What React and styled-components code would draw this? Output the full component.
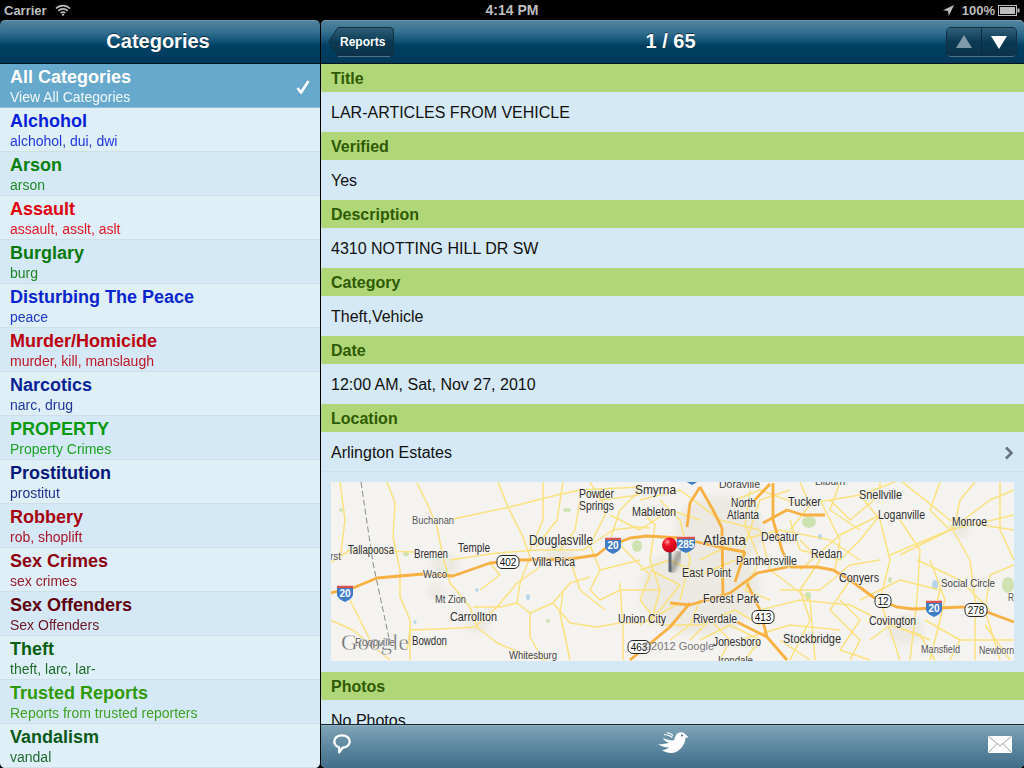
import React from 'react'
import styled, { createGlobalStyle } from 'styled-components'

const GlobalStyle = createGlobalStyle`
  html, body { margin: 0; padding: 0; background: #000; }
  body { font-family: "Liberation Sans", Arial, sans-serif; }
`

const Screen = styled.div`
  width: 1024px;
  height: 768px;
  display: flex;
  flex-direction: column;
  overflow: hidden;
  background: #000;
`

const StatusBar = styled.div`
  height: 20px;
  flex: none;
  display: grid;
  grid-template-columns: 1fr auto 1fr;
  align-items: center;
  padding: 0 4px;
  box-sizing: border-box;
  color: #bdbdbd;
  font-size: 13px;
  font-weight: bold;
`

const StatusTime = styled.div`
  font-size: 14px;
`

const StatusLeft = styled.div`
  display: flex;
  align-items: center;
  gap: 8px;
`

const StatusRight = styled.div`
  display: flex;
  align-items: center;
  justify-content: flex-end;
  gap: 3px;
  svg:first-child { margin-right: 5px; }
`

const Main = styled.div`
  flex: 1;
  min-height: 0;
  display: flex;
  gap: 1px;
`

const Sidebar = styled.div`
  width: 320px;
  flex: none;
  display: flex;
  flex-direction: column;
  border-radius: 5px;
  overflow: hidden;
`

const Detail = styled.div`
  flex: 1;
  min-width: 0;
  display: flex;
  flex-direction: column;
  border-radius: 5px;
  overflow: hidden;
  background: #d5e8f6;
`

const NavBar = styled.div`
  height: 44px;
  flex: none;
  box-sizing: border-box;
  display: grid;
  grid-template-columns: 1fr auto 1fr;
  align-items: center;
  padding: 0 7px 1px;
  border-bottom: 1px solid #02141f;
  background: linear-gradient(#6a97ad 0, #4f829c 2px, #357090 12px, #14577a 20px, #003f61 26px, #003a5a 43px);
`

const NavTitle = styled.div`
  grid-column: 2;
  margin-right: 4px;
  color: #fff;
  font-size: 20px;
  font-weight: bold;
  text-shadow: 0 -1px 0 rgba(0, 0, 0, 0.5);
`

const BackButton = styled.div`
  position: relative;
  justify-self: start;
  width: 66px;
  height: 30px;
  margin-top: 1px;
  box-sizing: border-box;
  padding-left: 12px;
  display: flex;
  align-items: center;
  color: #fff;
  font-size: 12px;
  font-weight: bold;
  svg { position: absolute; left: 0; top: 0; }
  span { position: relative; }
`

const ArrowGroup = styled.div`
  justify-self: end;
  display: flex;
  width: 71px;
  height: 30px;
  margin-top: 1px;
  box-sizing: border-box;
  border: 1px solid #12303f;
  border-bottom-color: #4a7288;
  border-radius: 5px;
  overflow: hidden;
`

const ArrowButton = styled.div`
  flex: 1;
  display: flex;
  align-items: center;
  justify-content: center;
  background: linear-gradient(#2f5f79, #0a3a54 50%, #0c3249);
  & + & { border-left: 1px solid #0c2c3e; }
`

const CategoryList = styled.div`
  flex: 1;
  min-height: 0;
  overflow: hidden;
`

const CategoryRow = styled.div`
  height: 44px;
  box-sizing: border-box;
  padding: 2px 10px 0;
  display: flex;
  align-items: center;
  justify-content: space-between;
  border-bottom: 1px solid ${p => (p.$selected ? '#8fbfd8' : '#cfdfe8')};
  background: ${p => (p.$selected ? '#67a9cc' : p.$odd ? '#d5e8f6' : '#deeff8')};
  color: ${p => p.$color};
`

const CategoryName = styled.div`
  font-size: 18px;
  line-height: 21px;
  font-weight: bold;
`

const CategoryHint = styled.div`
  font-size: 14px;
  line-height: 19px;
  opacity: 0.9;
`

const Content = styled.div`
  flex: 1;
  min-height: 0;
  overflow: hidden;
`

const SectionHeader = styled.div`
  height: 28px;
  box-sizing: border-box;
  padding: 2px 0 0 10px;
  display: flex;
  align-items: center;
  background: #afd777;
  color: #2f5a05;
  font-size: 16px;
  font-weight: bold;
`

const ValueRow = styled.div`
  height: 40px;
  box-sizing: border-box;
  padding: 2px 10px 0;
  display: flex;
  align-items: center;
  justify-content: space-between;
  background: #d5e8f6;
  color: #111;
  font-size: 16px;
  border-bottom: ${p => (p.$line ? '1px solid #cfe0ec' : 'none')};
`

const MapBlock = styled.div`
  padding: 10px 10px 11px;
  height: 200px;
  box-sizing: border-box;
`

const MapFrame = styled.svg`
  display: block;
  width: 683px;
  height: 179px;
  background: #f4f3f0;
`

const MapLabel = styled.text`
  font-family: "Liberation Sans", Arial, sans-serif;
  fill: ${p => p.$fill || '#2e2e2e'};
  stroke: #f6f5f1;
  stroke-width: 1.5px;
  stroke-opacity: 0.8;
  paint-order: stroke;
`

const Toolbar = styled.div`
  height: 44px;
  flex: none;
  box-sizing: border-box;
  display: grid;
  grid-template-columns: 1fr auto 1fr;
  align-items: center;
  padding: 0 12px 5px;
  border-top: 1px solid #0e2530;
  background: linear-gradient(#a7bfcc 0, #7fa3b6 1px, #5f8aa2 20px, #3f6c88 43px);
  svg:last-child { justify-self: end; }
`

const categories = [
  { name: 'Alchohol', hint: 'alchohol, dui, dwi', color: '#0a1fdc' },
  { name: 'Arson', hint: 'arson', color: '#0a800f' },
  { name: 'Assault', hint: 'assault, asslt, aslt', color: '#e0000f' },
  { name: 'Burglary', hint: 'burg', color: '#0a7a10' },
  { name: 'Disturbing The Peace', hint: 'peace', color: '#0a25d0' },
  { name: 'Murder/Homicide', hint: 'murder, kill, manslaugh', color: '#bb000f' },
  { name: 'Narcotics', hint: 'narc, drug', color: '#0a1f98' },
  { name: 'PROPERTY', hint: 'Property Crimes', color: '#0a9a10' },
  { name: 'Prostitution', hint: 'prostitut', color: '#08187c' },
  { name: 'Robbery', hint: 'rob, shoplift', color: '#a5000f' },
  { name: 'Sex Crimes', hint: 'sex crimes', color: '#8c000f' },
  { name: 'Sex Offenders', hint: 'Sex Offenders', color: '#5e000c' },
  { name: 'Theft', hint: 'theft, larc, lar-', color: '#0a5f12' },
  { name: 'Trusted Reports', hint: 'Reports from trusted reporters', color: '#2f9a0a' },
  { name: 'Vandalism', hint: 'vandal', color: '#0c5a1a' },
]

const sections = [
  { title: 'Title', value: 'LAR-ARTICLES FROM VEHICLE' },
  { title: 'Verified', value: 'Yes' },
  { title: 'Description', value: '4310 NOTTING HILL DR SW' },
  { title: 'Category', value: 'Theft,Vehicle' },
  { title: 'Date', value: '12:00 AM, Sat, Nov 27, 2010' },
]

const highways = [
  '330,593 353,588 377,578 423,574 453,576 490,563 520,560 570,559 597,555 607,547 630,538 647,536 680,538 723,548 745,552',
  '790,567 817,567 833,570 850,580 873,597 897,607 913,609 963,607 987,612 1014,622',
  '670,603 690,605 730,593 757,573 788,567',
  '722,528 723,600',
  '700,487 690,503 687,527',
  '700,487 713,510 722,528',
  '773,483 773,520 782,550 790,567',
  '763,523 787,510 803,515 825,515',
  '747,583 760,610 767,637 787,660',
  '737,622 767,637',
  '690,603 670,627 630,660',
  '745,552 735,582',
  '770,484 750,505',
]

const roads = [
  '453,519 510,507 557,495 580,490 640,487',
  '417,483 427,503 437,527 443,557 450,583 470,607 477,627 497,643 530,657 547,660',
  '387,482 395,503 393,537 400,570 400,597 410,620 410,660',
  '498,482 508,507 523,537 530,557 520,583 517,603 500,607 473,607',
  '543,482 543,520 530,550',
  '563,482 557,520 536,547',
  '450,560 497,553 537,550 583,550 613,530 637,527 650,528',
  '330,620 353,630 390,660',
  '477,627 440,629 410,630 407,650',
  '477,625 497,607 517,583 540,567',
  '517,603 530,613 553,603 570,583 590,577',
  '530,613 530,637 543,660',
  '553,603 570,623 597,627 620,623 643,623 680,603',
  '563,593 560,613 570,660',
  '620,583 623,630 623,660',
  '330,563 350,550 414,552',
  '640,490 620,510 610,540',
  '640,560 600,570 590,590 600,600 620,590 660,590',
  '650,570 680,585 660,610 640,625',
  '660,500 680,520 690,560 680,600',
  '640,500 680,490 720,520 760,530',
  '700,560 740,540 780,530 830,540 860,560',
  '735,500 760,490 800,505 860,495 900,480',
  '820,500 840,540 835,570',
  '860,495 880,520 890,560 880,600 900,660',
  '800,540 820,560 800,590 810,620 790,660',
  '850,580 830,610 860,640 850,660',
  '880,515 840,535 800,570',
  '900,520 920,550 917,600 910,660',
  '900,555 950,530 1014,515',
  '950,525 970,560 975,600 975,660',
  '917,560 960,580 990,610',
  '890,555 950,530 990,500 1014,490',
  '900,480 950,520 1014,530',
  '925,620 960,640 1014,640',
  '760,610 800,600 850,605 880,620 930,640',
  '740,640 790,625 840,630',
  '760,530 770,570 810,600 815,660',
  '975,482 960,500 955,525',
  '930,560 945,600 930,660',
  '690,640 710,620 730,640 720,660',
  '670,640 690,625 700,600',
  '740,560 750,530 760,500 790,490',
  '860,600 900,580 940,590 935,610',
  '1014,565 990,575 985,610 1000,660',
  '640,510 655,525 650,560 660,590 650,625',
  '610,515 640,530 670,510 700,520',
  '600,490 605,515 590,545 600,570',
  '580,500 575,530 560,550',
  '640,570 670,560 700,575 735,560',
  '665,625 700,625 735,610 760,625',
  '700,640 730,625 760,640 745,660',
  '620,545 650,575 640,600 660,625',
  '750,490 745,525 760,560 745,590 770,600',
  '790,520 800,550 840,560 860,540 880,515',
  '780,590 820,590 850,565 880,560',
  '830,500 850,520 880,495 880,482',
  '870,640 890,625 920,635 935,660',
  '840,600 860,620 840,650 870,660',
  '780,640 810,660',
  '800,482 810,505 790,530',
  '840,482 830,510 860,530',
  '940,482 930,510 950,530',
  '1000,482 1000,530 1014,560',
  '960,640 950,660',
  '985,625 1010,660',
  '480,590 500,575 490,563',
  '570,559 580,590 605,610',
  '590,482 600,500 640,495',
  '350,600 370,640',
  '340,482 345,520 340,560',
]

// text, left edge, right edge, centre y, font size, colour
const labels = [
  ['Smyrna', 635, 676, 489, 13], ['Powder', 579, 614, 494, 12], ['Springs', 579, 614, 506, 12], ['Mableton', 632, 676, 512, 12],
  ['Buchanan', 412, 454, 520, 11, '#555'], ['Tallapoosa', 348, 394, 550, 12], ['rst', 330, 341, 556, 11, '#555'], ['Bremen', 414, 448, 554, 12],
  ['Temple', 458, 490, 548, 12], ['Douglasville', 529, 593, 540, 14], ['Villa Rica', 532, 575, 562, 12], ['Waco', 423, 447, 574, 11, '#444'],
  ['Mt Zion', 435, 466, 599, 11, '#444'], ['Carrollton', 450, 497, 616, 13], ['Roopville', 355, 395, 642, 11, '#555'], ['Bowdon', 412, 447, 641, 12],
  ['Whitesburg', 509, 557, 655, 11, '#444'], ['Union City', 618, 666, 619, 12], ['Doraville', 719, 760, 484, 11, '#444'], ['Lilburn', 815, 845, 481, 11, '#444'],
  ['North', 731, 756, 503, 12], ['Atlanta', 727, 759, 515, 12], ['Tucker', 788, 821, 502, 12], ['Snellville', 859, 902, 495, 12],
  ['Loganville', 878, 925, 515, 12], ['Monroe', 952, 987, 522, 12], ['Atlanta', 703, 746, 540, 15], ['Decatur', 761, 798, 537, 12],
  ['Redan', 811, 842, 554, 12], ['Panthersville', 736, 797, 561, 12], ['East Point', 682, 731, 573, 12], ['Conyers', 839, 879, 578, 12],
  ['Social Circle', 941, 995, 583, 11, '#444'], ['Forest Park', 703, 759, 598, 13], ['Riverdale', 693, 737, 619, 12], ['Covington', 869, 916, 621, 12],
  ['Jonesboro', 713, 761, 642, 12], ['Stockbridge', 783, 841, 638, 13], ['Irondale', 718, 753, 660, 11, '#444'], ['Mansfield', 921, 960, 649, 11, '#555'],
  ['Newborn', 979, 1014, 650, 11, '#555'], ['R', 1008, 1014, 597, 11, '#555'],
]

const interstates = [
  ['20', 613, 545], ['20', 345, 593], ['285', 686, 544], ['20', 692, 476], ['20', 934, 608],
]

const stateRoutes = [
  ['402', 508, 562], ['463', 639, 647], ['413', 763, 617], ['12', 883, 601], ['278', 976, 610],
]

function WifiIcon() {
  return (
    <svg width="16" height="12" viewBox="0 0 16 12">
      <path d="M1 4.500a10 10 0 0 1 14 0M3.300 6.800a6.800 6.800 0 0 1 9.400 0M5.600 9a3.400 3.400 0 0 1 4.800 0" fill="none" stroke="#bdbdbd" strokeWidth="1.700" />
      <circle cx="8" cy="10.600" r="1.200" fill="#bdbdbd" />
    </svg>
  )
}

function LocationIcon() {
  return (
    <svg width="11" height="11" viewBox="0 0 11 11">
      <path d="M11 0 0 5.200 5 6l.8 5z" fill="#bdbdbd" />
    </svg>
  )
}

function BatteryIcon() {
  return (
    <svg width="22" height="11" viewBox="0 0 22 11">
      <rect x="0.500" y="0.500" width="18" height="10" fill="none" stroke="#bdbdbd" />
      <rect x="2" y="2" width="15" height="7" fill="#bdbdbd" />
      <rect x="19.500" y="3.500" width="2" height="4" fill="#bdbdbd" />
    </svg>
  )
}

function BackShape() {
  return (
    <svg width="66" height="30" viewBox="0 0 66 30">
      <defs>
        <linearGradient id="backFill" x1="0" y1="0" x2="0" y2="1">
          <stop offset="0" stopColor="#2f5f79" />
          <stop offset="0.5" stopColor="#0a3a54" />
          <stop offset="1" stopColor="#0c3249" />
        </linearGradient>
      </defs>
      <path d="M10 .5H62a3.500 3.500 0 0 1 3.500 3.500V25.500a3.500 3.500 0 0 1-3.500 3.500H10L.5 15z" fill="url(#backFill)" stroke="#12303f" />
      <path d="M10 29.500H62" stroke="#4a7288" />
    </svg>
  )
}

function TriangleIcon({ down, color }) {
  return (
    <svg width="16" height="14" viewBox="0 0 16 14">
      <path d={down ? 'M0 1h16L8 14z' : 'M0 13h16L8 0z'} fill={color} />
    </svg>
  )
}

function BubbleIcon() {
  return (
    <svg width="18" height="21" viewBox="0 0 18 21">
      <path d="M6.200 13.300C3.500 12.500 1.300 10.400 1.300 7.500 1.300 3.800 4.700 1.300 9 1.300s7.700 2.500 7.700 6.200-3.200 6.200-6.900 6.200L6.200 18.300z" fill="none" stroke="#fff" strokeWidth="2.300" strokeLinejoin="round" />
    </svg>
  )
}

function BirdIcon() {
  return (
    <svg width="32" height="24" viewBox="16 10 32 24">
      <path d="M35 13C37 9.500 43 9 45 13L47.500 15 44.500 16C44 22 40 28 35 30 31 32 25 31 21 28 24 28 26 27 28 25.500 24.500 25.500 20 24.500 17 22 21 22.500 25 22 28 20.500 25 20 23 18.500 22 16 27 18 31 19 33 18 34 16 34 15 35 13Z" fill="#fff" />
      <path d="M23 12.500C26 12.500 29 13.500 31.500 15.500M26 10.500C28.500 11 30.500 12 32 13.500" fill="none" stroke="#fff" strokeWidth="1.200" />
      <circle cx="41" cy="13.500" r="1" fill="#3f6c88" />
    </svg>
  )
}

function MailIcon() {
  return (
    <svg width="24" height="17" viewBox="0 0 24 17">
      <rect width="24" height="17" rx="1" fill="#fff" />
      <path d="M.5.500 12 10 23.500.500M.5 16.500l8.500-9M23.500 16.500l-8.500-9" fill="none" stroke="#7a8c96" strokeWidth=".8" />
    </svg>
  )
}

function InterstateShield({ label, x, y }) {
  const w = label.length > 2 ? 9 : 8
  return (
    <g transform={`translate(${x} ${y})`}>
      <path d={`M${-w}-8h${w * 2}v9c0 4-${w / 2} 6-${w} 8-${w / 2}-2-${w}-4-${w}-8z`} fill="#3f7cc8" />
      <path d={`M${-w}-8h${w * 2}v3h${-w * 2}z`} fill="#d9534f" />
      <path d={`M${-w}-8h${w * 2}v1h${-w * 2}z`} fill="#fff" opacity=".7" />
      <text x="0" y="3.500" textAnchor="middle" fontFamily="Liberation Sans" fontWeight="bold" fontSize="10" fill="#fff">{label}</text>
    </g>
  )
}

function RouteShield({ label, x, y }) {
  const w = label.length > 2 ? 11 : 8
  return (
    <g transform={`translate(${x} ${y})`}>
      <rect x={-w} y="-6.500" width={w * 2} height="13" rx="5" fill="#fff" stroke="#222" strokeWidth="1" />
      <text x="0" y="3.500" textAnchor="middle" fontFamily="Liberation Sans" fontSize="10" fill="#111">{label}</text>
    </g>
  )
}

function CityMap() {
  return (
    <MapFrame viewBox="331 482 683 179">
      <defs>
        <filter id="soft"><feGaussianBlur stdDeviation="3" /></filter>
        <filter id="softer"><feGaussianBlur stdDeviation="2" /></filter>
        <radialGradient id="ball" cx="0.35" cy="0.3" r="0.8">
          <stop offset="0" stopColor="#ff9d9d" />
          <stop offset="0.3" stopColor="#f0142a" />
          <stop offset="1" stopColor="#b80012" />
        </radialGradient>
      </defs>
      <g fill="#ebe9e1" filter="url(#soft)">
        <ellipse cx="700" cy="590" rx="60" ry="45" />
        <ellipse cx="720" cy="530" rx="45" ry="35" />
        <ellipse cx="445" cy="565" rx="14" ry="10" />
        <ellipse cx="435" cy="592" rx="8" ry="8" />
        <ellipse cx="478" cy="625" rx="12" ry="8" />
        <ellipse cx="560" cy="555" rx="16" ry="8" />
        <ellipse cx="905" cy="630" rx="18" ry="14" />
        <ellipse cx="960" cy="530" rx="10" ry="8" />
      </g>
      <g fill="#cfe3b2">
        <ellipse cx="809" cy="522" rx="7" ry="6" />
        <ellipse cx="637" cy="546" rx="5" ry="6" />
        <ellipse cx="567" cy="510" rx="4" ry="2" />
        <ellipse cx="1008" cy="585" rx="6" ry="8" />
        <ellipse cx="406" cy="554" rx="3" ry="2" />
        <ellipse cx="341" cy="510" rx="2" ry="2" />
        <ellipse cx="890" cy="580" rx="2" ry="3" />
        <ellipse cx="808" cy="596" rx="3" ry="4" />
        <ellipse cx="548" cy="621" rx="2" ry="2" />
      </g>
      <g fill="#b5d5ec">
        <ellipse cx="935" cy="585" rx="3" ry="5" />
        <ellipse cx="528" cy="597" rx="2" ry="3" />
        <ellipse cx="477" cy="590" rx="1.500" ry="2" />
        <ellipse cx="820" cy="537" rx="2" ry="3" />
        <ellipse cx="415" cy="622" rx="1.500" ry="2" />
      </g>
      <path d="M361 482 373 563 390 643" fill="none" stroke="#8a8a8a" strokeWidth="1" strokeDasharray="6 3" />
      <g fill="none" stroke="#fbe27e" strokeWidth="1.500" strokeLinejoin="round">
        {roads.map((points, i) => <polyline key={i} points={points} />)}
      </g>
      <g fill="none" stroke="#f6b142" strokeWidth="2.800" strokeLinejoin="round">
        {highways.map((points, i) => <polyline key={i} points={points} />)}
      </g>
      {labels.map(([text, x1, x2, y, size, fill], i) => (
        <MapLabel
          key={i}
          x={x1}
          y={y + size * 0.36}
          fontSize={size}
          textLength={x2 - x1}
          lengthAdjust="spacingAndGlyphs"
          $fill={fill}
        >
          {text}
        </MapLabel>
      ))}
      {interstates.map(([label, x, y], i) => <InterstateShield key={i} label={label} x={x} y={y} />)}
      {stateRoutes.map(([label, x, y], i) => <RouteShield key={i} label={label} x={x} y={y} />)}
      <text x="341" y="650" fontFamily="Liberation Serif" fontSize="23" fill="#6e6e6e" stroke="#fff" strokeWidth=".4">Google</text>
      <text x="643" y="650" fontFamily="Liberation Sans" fontSize="11" fill="#777">©2012 Google</text>
      <path d="M671 571 680 553" stroke="#555" strokeWidth="7" opacity=".5" strokeLinecap="round" filter="url(#softer)" />
      <rect x="668.500" y="550" width="3" height="22" rx="1" fill="#5f6a74" />
      <circle cx="669.500" cy="545" r="7.500" fill="url(#ball)" />
    </MapFrame>
  )
}

export default function App() {
  return (
    <Screen>
      <GlobalStyle />
      <StatusBar>
        <StatusLeft>Carrier <WifiIcon /></StatusLeft>
        <StatusTime>4:14 PM</StatusTime>
        <StatusRight><LocationIcon /> 100% <BatteryIcon /></StatusRight>
      </StatusBar>
      <Main>
        <Sidebar>
          <NavBar>
            <NavTitle>Categories</NavTitle>
          </NavBar>
          <CategoryList>
            <CategoryRow $selected $color="#fff">
              <div>
                <CategoryName>All Categories</CategoryName>
                <CategoryHint>View All Categories</CategoryHint>
              </div>
              <svg width="14" height="14" viewBox="0 0 14 14">
                <path d="M1.500 8l3.500 4.500L12.500 1" fill="none" stroke="#fff" strokeWidth="2.600" />
              </svg>
            </CategoryRow>
            {categories.map((c, i) => (
              <CategoryRow key={c.name} $odd={i % 2 === 1} $color={c.color}>
                <div>
                  <CategoryName>{c.name}</CategoryName>
                  <CategoryHint>{c.hint}</CategoryHint>
                </div>
              </CategoryRow>
            ))}
          </CategoryList>
        </Sidebar>
        <Detail>
          <NavBar>
            <BackButton><BackShape /><span>Reports</span></BackButton>
            <NavTitle>1 / 65</NavTitle>
            <ArrowGroup>
              <ArrowButton><TriangleIcon color="#7f99a8" /></ArrowButton>
              <ArrowButton><TriangleIcon down color="#fff" /></ArrowButton>
            </ArrowGroup>
          </NavBar>
          <Content>
            {sections.map(s => (
              <React.Fragment key={s.title}>
                <SectionHeader>{s.title}</SectionHeader>
                <ValueRow>{s.value}</ValueRow>
              </React.Fragment>
            ))}
            <SectionHeader>Location</SectionHeader>
            <ValueRow $line>
              Arlington Estates
              <svg width="10" height="14" viewBox="0 0 10 14">
                <path d="M2 1.500 7.500 7 2 12.500" fill="none" stroke="#66757f" strokeWidth="2.600" />
              </svg>
            </ValueRow>
            <MapBlock><CityMap /></MapBlock>
            <SectionHeader>Photos</SectionHeader>
            <ValueRow>No Photos</ValueRow>
          </Content>
          <Toolbar>
            <BubbleIcon />
            <BirdIcon />
            <MailIcon />
          </Toolbar>
        </Detail>
      </Main>
    </Screen>
  )
}
